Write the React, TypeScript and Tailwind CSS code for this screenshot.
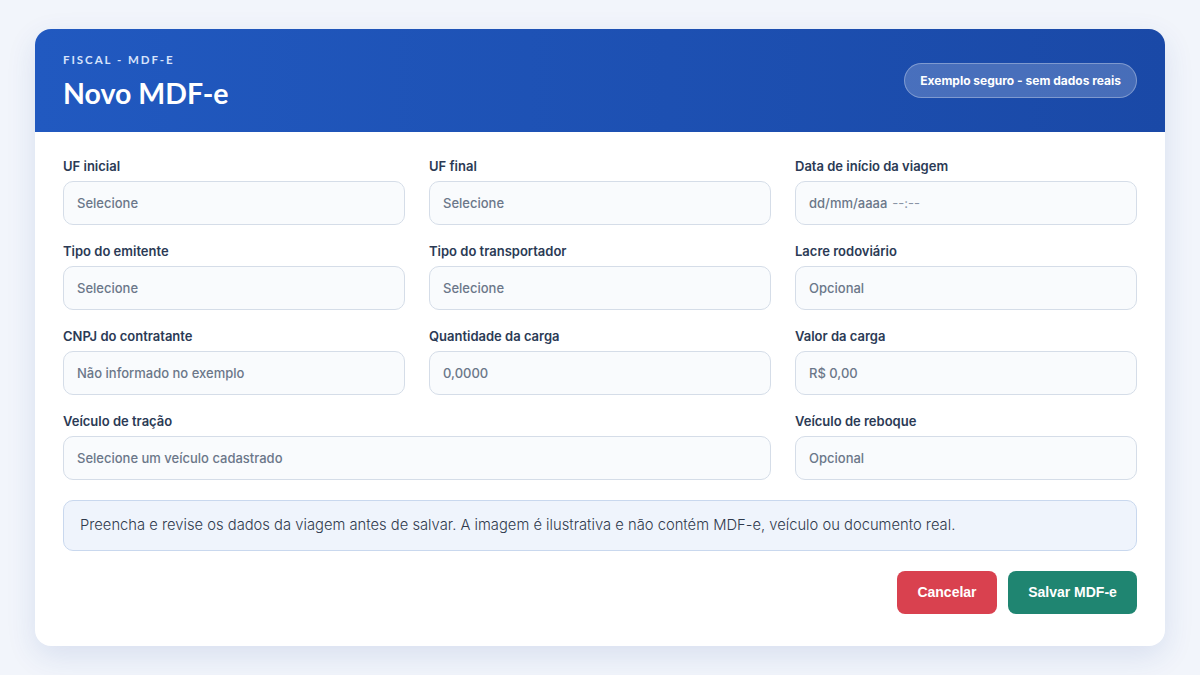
const fields = [
  { label: "UF inicial", placeholder: "Selecione" },
  { label: "UF final", placeholder: "Selecione" },
  { label: "Data de início da viagem", placeholder: "dd/mm/aaaa", suffix: "--:--" },
  { label: "Tipo do emitente", placeholder: "Selecione" },
  { label: "Tipo do transportador", placeholder: "Selecione" },
  { label: "Lacre rodoviário", placeholder: "Opcional" },
  { label: "CNPJ do contratante", placeholder: "Não informado no exemplo" },
  { label: "Quantidade da carga", placeholder: "0,0000" },
  { label: "Valor da carga", placeholder: "R$ 0,00" },
  { label: "Veículo de tração", placeholder: "Selecione um veículo cadastrado", wide: true },
  { label: "Veículo de reboque", placeholder: "Opcional" },
];

type Field = {
  label: string;
  placeholder: string;
  suffix?: string;
  wide?: boolean;
};

const inter = { fontFamily: "Inter, 'Noto Sans', sans-serif" };

function FormField({ field }: { field: Field }) {
  return (
    <div className={field.wide ? "col-span-2" : ""} style={inter}>
      <div className="mb-[7px] text-[13px] font-semibold leading-[16px] text-[#2b3a55]">
        {field.label}
      </div>
      <div className="flex h-[44px] items-center rounded-[10px] border border-[#d5dde8] bg-[#f9fbfd] px-[13px] pt-[1px] text-[13px] font-medium text-[#6b7789]">
        {field.placeholder}
        {field.suffix && (
          <span className="ml-[5px] font-normal text-[#8a94a5]">{field.suffix}</span>
        )}
      </div>
    </div>
  );
}

export default function App() {
  return (
    <div
      className="flex h-[675px] w-[1200px] items-start justify-center bg-[#f2f5fb] pt-[29px]"
      style={{ fontFamily: "Lato, 'Noto Sans', sans-serif" }}
    >
      <div className="w-[1130px] overflow-hidden rounded-[16px] bg-white shadow-[0_10px_30px_rgba(37,76,160,0.12)]">
        {/* Header */}
        <div className="flex h-[103px] items-center justify-between bg-gradient-to-r from-[#2159c0] to-[#1a49a7] px-[28px]">
          <div className="pt-[1px]">
            <div className="text-[11.5px] font-bold leading-[14px] tracking-[0.17em] text-[#d7e3fb]">
              FISCAL - MDF-E
            </div>
            <div className="mt-[9px] text-[28.5px] font-bold leading-[34px] text-white">
              Novo MDF-e
            </div>
          </div>
          <div
            className="flex h-[35px] items-center rounded-full border border-white/30 bg-white/20 px-[15px] text-[12px] font-bold text-white"
            style={inter}
          >
            Exemplo seguro - sem dados reais
          </div>
        </div>

        {/* Body */}
        <div className="px-[28px] pb-[32px] pt-[26px]">
          <div className="grid grid-cols-3 gap-x-[24px] gap-y-[18px]">
            {fields.map((f) => (
              <FormField key={f.label} field={f} />
            ))}
          </div>

          <div
            className="mt-[20px] flex h-[51px] items-center rounded-[10px] border border-[#c9d8ee] bg-[#eff4fc] px-[16px] text-[14.75px] font-light text-[#2f3a4d]"
            style={inter}
          >
            Preencha e revise os dados da viagem antes de salvar. A imagem é ilustrativa e não contém MDF-e, veículo ou documento real.
          </div>

          <div className="mt-[20px] flex justify-end gap-[11px]" style={{ fontFamily: "'Liberation Sans', Arial, sans-serif" }}>
            <button className="h-[43px] w-[100px] rounded-[8px] bg-[#d9414f] text-[14px] font-bold text-white">
              Cancelar
            </button>
            <button className="h-[43px] w-[129px] rounded-[8px] bg-[#1f8571] text-[14px] font-bold text-white">
              Salvar MDF-e
            </button>
          </div>
        </div>
      </div>
    </div>
  );
}
